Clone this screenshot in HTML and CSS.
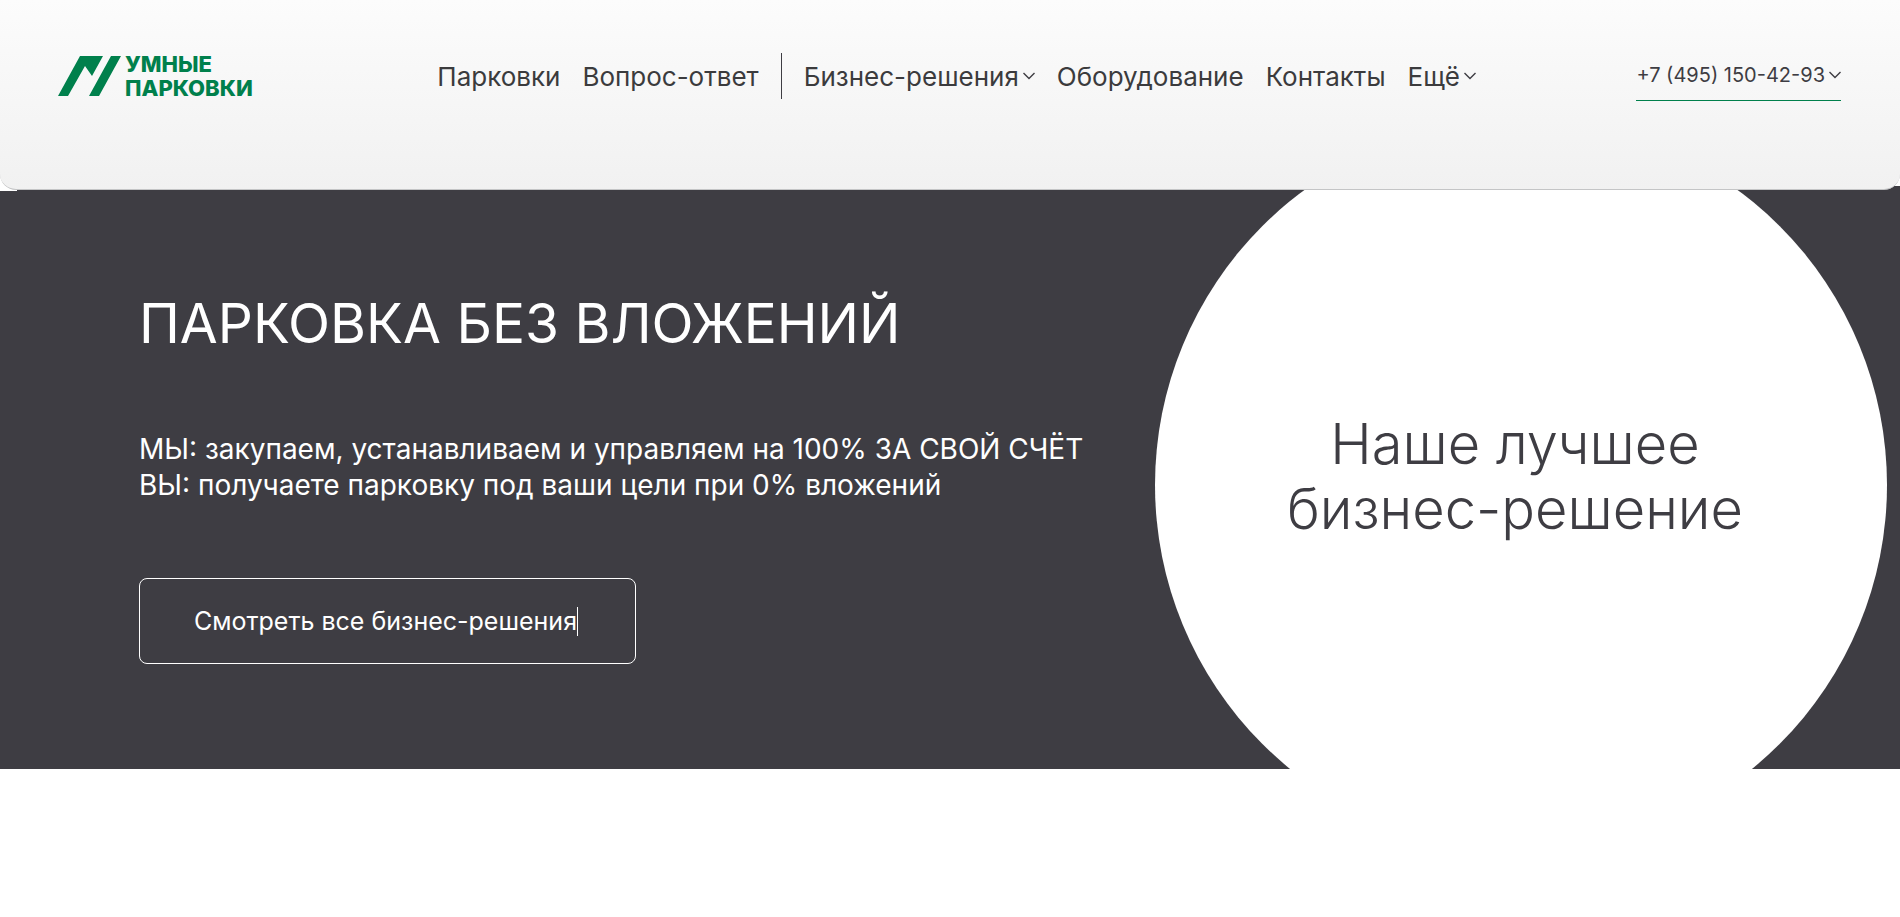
FILE: index.html
```html
<!DOCTYPE html>
<html lang="ru">
<head>
<meta charset="utf-8">
<meta name="viewport" content="width=device-width, initial-scale=1">
<title>Умные парковки</title>
<link rel="stylesheet" href="styles.css">
</head>
<body>
<header class="header">
  <a class="logo" href="#">
    <svg class="logo-mark" viewBox="0 0 63 40" aria-hidden="true"><path d="M22 0H45L34 20L27 10L10 40H0ZM53 0H63L41 40H31Z"/></svg>
    <span class="logo-text"><span>УМНЫЕ</span><span>ПАРКОВКИ</span></span>
  </a>
  <nav class="nav">
    <a href="#">Парковки</a>
    <a href="#">Вопрос-ответ</a>
    <span class="divider"></span>
    <a href="#">Бизнес-решения<svg class="chevron" viewBox="0 0 12 8" aria-hidden="true"><path d="M.5 1L6 6.500L11.500 1"/></svg></a>
    <a href="#">Оборудование</a>
    <a href="#">Контакты</a>
    <a href="#">Ещё<svg class="chevron" viewBox="0 0 12 8" aria-hidden="true"><path d="M.5 1L6 6.500L11.500 1"/></svg></a>
  </nav>
  <a class="phone" href="tel:+74951504293">+7 (495) 150-42-93<svg class="chevron" viewBox="0 0 12 8" aria-hidden="true"><path d="M.5 1L6 6.500L11.500 1"/></svg></a>
</header>
<main class="hero">
  <section class="offer">
    <h1 class="title">ПАРКОВКА БЕЗ ВЛОЖЕНИЙ</h1>
    <p class="lead">МЫ: закупаем, устанавливаем и управляем на 100% ЗА СВОЙ СЧЁТ<br>ВЫ: получаете парковку под ваши цели при 0% вложений</p>
    <a class="cta" href="#"><span class="typed">Смотреть все бизнес-решения</span></a>
  </section>
  <div class="circle"><p class="slogan">Наше лучшее<br>бизнес-решение</p></div>
</main>
</body>
</html>
```
FILE: styles.css
```css
* { box-sizing: border-box; }

body {
  margin: 0;
  background: #fff;
  color: #3e3d43;
  font-family: Inter, "Noto Sans", sans-serif;
}

a { color: inherit; text-decoration: none; }
h1, p { margin: 0; font-weight: 400; }

.header {
  position: relative;
  z-index: 1;
  display: flex;
  justify-content: space-between;
  align-items: flex-start;
  height: 190px;
  padding: 52px 59px 0 58px;
  border-bottom: 1px solid #c4c5c6;
  border-radius: 0 0 16px 16px;
  background: linear-gradient(#fcfcfc, #f1f1f1);
}

.logo {
  display: flex;
  align-items: center;
  gap: 4px;
  height: 48px;
  color: #00804c;
}

.logo-mark { width: 63px; height: 40px; fill: currentColor; }

.logo-text {
  display: flex;
  flex-direction: column;
  font-size: 22px;
  font-weight: 800;
  line-height: 24px;
}

.nav {
  display: flex;
  align-items: center;
  gap: 22px;
  height: 48px;
  margin-left: 24px;
  color: #3b3b3d;
  font-size: 26px;
  white-space: nowrap;
}

.divider { width: 1px; height: 46px; background: #3e3d43; }

.chevron {
  width: 12px;
  height: 8px;
  margin-left: 4px;
  vertical-align: 6px;
  fill: none;
  stroke: #3e3d43;
  stroke-width: 1.4;
}

.phone {
  padding-bottom: 2px;
  border-bottom: 1px solid #00804c;
  font-size: 20px;
  font-weight: 400;
  line-height: 46px;
  white-space: nowrap;
}

.phone .chevron { vertical-align: 3px; }

.hero {
  position: relative;
  display: grid;
  grid-template-columns: minmax(0, 1fr) 732px;
  margin-top: -4px;
  padding-right: 13px;
  overflow: hidden;
  background: #3e3d43;
}

.hero::before {
  content: "";
  position: absolute;
  top: 0;
  left: 0;
  width: 17px;
  height: 5px;
  background: #fff;
}

.offer {
  padding: 105px 0 0 139px;
  color: #fff;
  white-space: nowrap;
}

.title { font-size: 55px; line-height: 64px; }
.lead { margin-top: 76px; font-size: 28px; line-height: 36px; }

.cta {
  display: inline-flex;
  align-items: center;
  height: 86px;
  margin-top: 75px;
  padding: 0 57px 0 54px;
  border: 1px solid #fff;
  border-radius: 8px;
  font-size: 25px;
}

.typed { border-right: 1px solid #fff; line-height: 29px; }

.circle {
  display: grid;
  place-items: center;
  height: 732px;
  margin: -67px 0 -82px;
  padding: 0 12px 16px 0;
  border-radius: 50%;
  background: #fff;
}

.slogan {
  font-size: 56px;
  font-weight: 300;
  line-height: 65px;
  text-align: center;
}
```
